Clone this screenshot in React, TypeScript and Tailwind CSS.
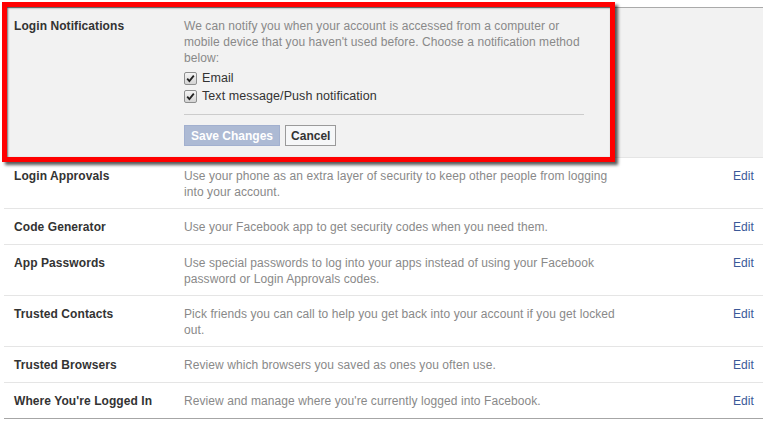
const rows = [
  {
    label: "Login Approvals",
    text: "Use your phone as an extra layer of security to keep other people from logging into your account.",
  },
  {
    label: "Code Generator",
    text: "Use your Facebook app to get security codes when you need them.",
  },
  {
    label: "App Passwords",
    text: "Use special passwords to log into your apps instead of using your Facebook password or Login Approvals codes.",
  },
  {
    label: "Trusted Contacts",
    text: "Pick friends you can call to help you get back into your account if you get locked out.",
  },
  {
    label: "Trusted Browsers",
    text: "Review which browsers you saved as ones you often use.",
  },
  {
    label: "Where You're Logged In",
    text: "Review and manage where you're currently logged into Facebook.",
  },
];

const Check = () => (
  <span className="w-[13px] h-[13px] mr-[5px] border border-[#8e8f8f] rounded-[2px] bg-gradient-to-b from-[#f4f4f4] to-[#d4d4d4] flex items-center justify-center">
    <svg width="9" height="9" viewBox="0 0 9 9">
      <path d="M1.2 4.6 L3.4 7 L7.8 1.6" fill="none" stroke="#222" strokeWidth="1.8" />
    </svg>
  </span>
);

export default function App() {
  return (
    <div className="relative w-[771px] h-[422px] bg-white font-['Liberation_Sans',Arial,sans-serif] text-[12px] leading-4 tracking-[0.08px]">
      <div className="pl-1 pt-[7px] w-[763px]">
        <div className="border-t border-[#aaaaaa] border-b border-b-[#a6a6a6]">
          {/* expanded row */}
          <div className="flex bg-[#f2f2f2] pl-[10px] pt-[10px] pb-[11px]">
            <div className="w-[170px] font-bold text-[#333]">Login Notifications</div>
            <div className="w-[400px]">
              <p className="text-[#898989]">
                We can notify you when your account is accessed from a computer or mobile device that you haven't used before. Choose a notification method below:
              </p>
              <div className="mt-[3px] text-[#333] text-[12.5px]">
                <label className="flex items-center h-[18px]">
                  <Check />
                  Email
                </label>
                <label className="flex items-center h-[18px]">
                  <Check />
                  Text message/Push notification
                </label>
              </div>
              <div className="mt-[9px] border-t border-[#cccccc]" />
              <div className="flex gap-[5px] mt-[10px]">
                <button className="h-[21px] px-[6px] bg-[#adbad4] border border-[#a2b0cf] text-white font-bold tracking-normal">
                  Save Changes
                </button>
                <button className="h-[21px] px-[5px] bg-[#f6f7f8] border border-[#9a9a9a] text-[#333] font-bold tracking-normal">
                  Cancel
                </button>
              </div>
            </div>
          </div>
          {rows.map((row) => (
            <div
              key={row.label}
              className="flex min-h-[36px] border-t border-[#e5e5e5] pl-[10px] pr-[9px] pt-[10px] pb-[8px]"
            >
              <div className="w-[170px] font-bold text-[#333]">{row.label}</div>
              <div className="w-[440px] text-[#898989]">{row.text}</div>
              <a className="ml-auto text-[#3b5998]">Edit</a>
            </div>
          ))}
        </div>
      </div>
      {/* red highlight */}
      <div className="absolute left-[2px] top-[2px] w-[613px] h-[160px] border-[5px] border-[#ff0000] shadow-[3px_3px_3px_rgba(0,0,0,0.65),inset_1px_1px_2px_rgba(0,0,0,0.55)]" />
    </div>
  );
}
